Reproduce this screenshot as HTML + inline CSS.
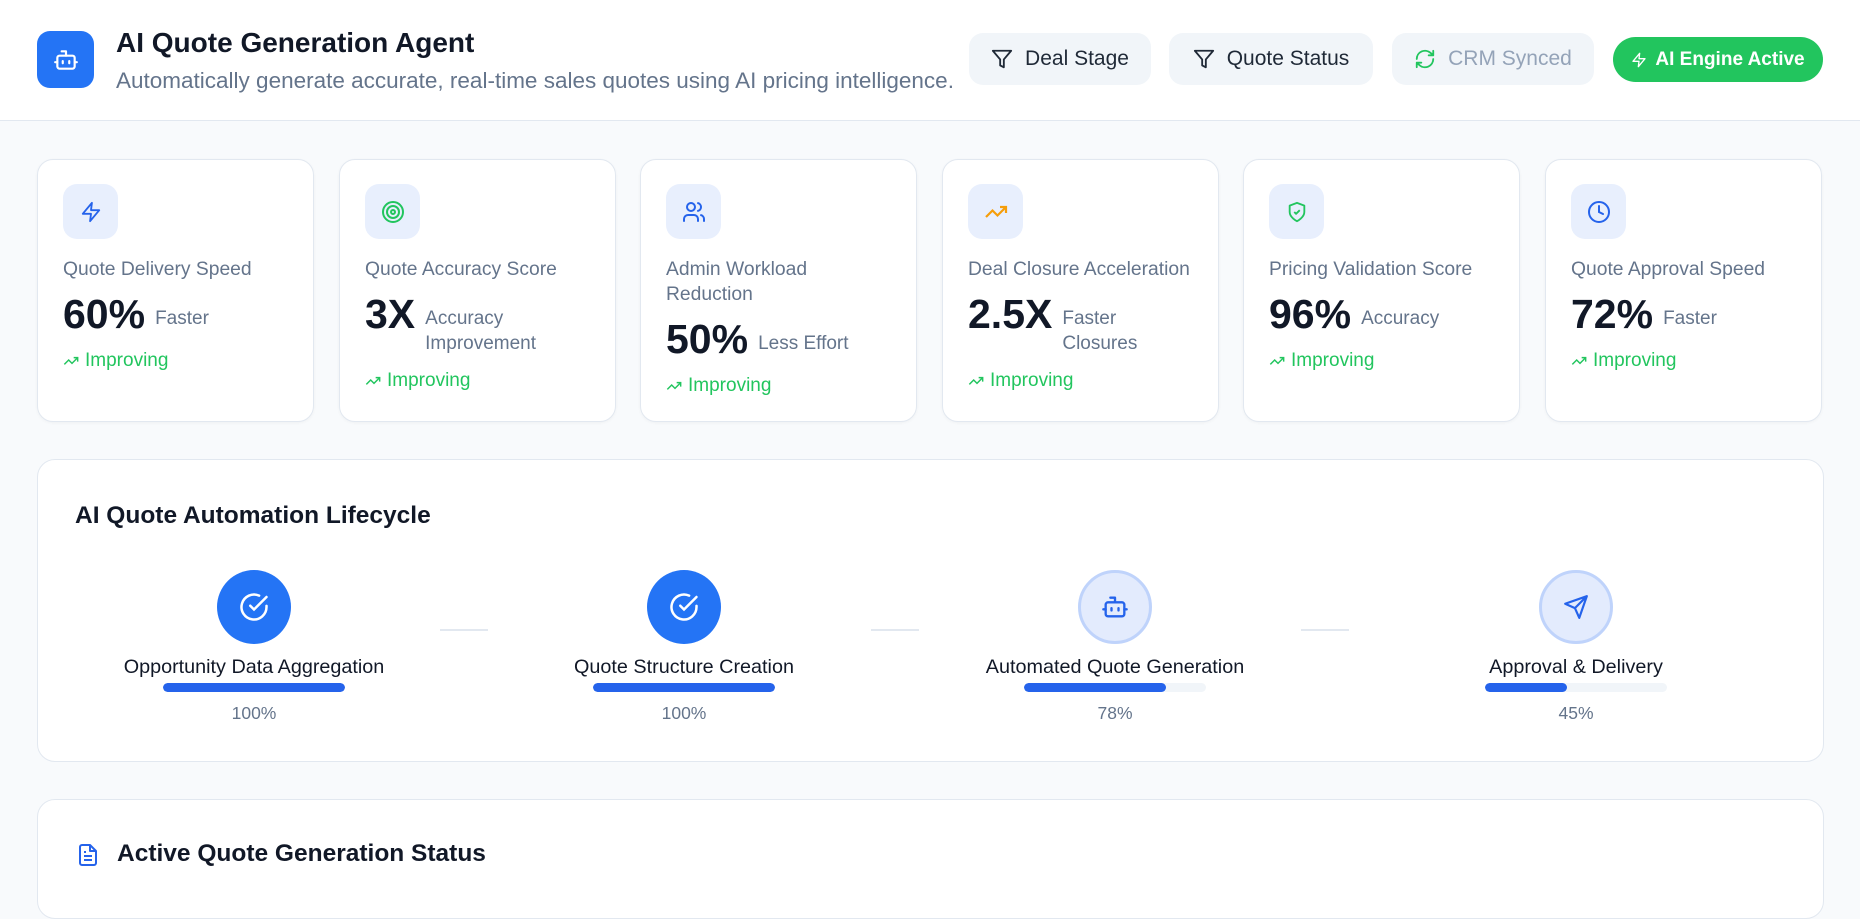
<!DOCTYPE html>
<html><head><meta charset="utf-8">
<style>
*{box-sizing:border-box;margin:0;padding:0}
body{width:1860px;height:877px;overflow:hidden;background:#f8fafc;font-family:"Liberation Sans",sans-serif;position:relative;color:#111827}
.hdr{position:absolute;left:0;top:0;width:1860px;height:121px;background:#fff;border-bottom:1px solid #e2e8f0}
.abs{position:absolute}
.btn{position:absolute;top:33px;height:52px;border-radius:14px;background:#f1f5f9;display:flex;align-items:center;justify-content:center;gap:12px;font-size:21px;color:#1f2937}
.card{position:absolute;top:159px;width:277px;height:263px;background:#fff;border:1px solid #e2e8f0;border-radius:16px;box-shadow:0 1px 3px rgba(0,0,0,.04)}
.ib{position:absolute;left:25px;top:24px;width:55px;height:55px;border-radius:14px;background:#e8effd;display:flex;align-items:center;justify-content:center}
.lbl{position:absolute;left:25px;top:97px;font-size:19.3px;color:#64748b;line-height:25px;width:245px}
.val{position:absolute;left:25px;display:flex;align-items:flex-start;gap:10px}
.val b{font-size:41px;color:#111827;line-height:46px}
.val span{font-size:19px;color:#64748b;line-height:25px;margin-top:15px}
.imp{position:absolute;left:25px;font-size:19px;color:#22c55e;display:flex;align-items:center;gap:6px}
.panel{position:absolute;left:37px;width:1787px;background:#fff;border:1px solid #e2e8f0;border-radius:18px}
.step{position:absolute;width:320px;text-align:center}
.circ{width:74px;height:74px;border-radius:50%;margin:0 auto;display:flex;align-items:center;justify-content:center}
.sl{position:absolute;top:86px;width:320px;font-size:19.8px;color:#111827}
.bar{position:absolute;left:69px;top:113px;width:182px;height:9px;border-radius:5px;background:#f1f5f9;overflow:hidden}
.bar i{display:block;height:100%;background:#2563eb;border-radius:5px}
.pc{position:absolute;top:133px;width:320px;font-size:17.5px;color:#64748b}
.con{position:absolute;top:629px;width:48px;height:2px;background:#e2e8f0}
</style></head><body>
<div class="hdr"></div>
<div class="abs" style="left:37px;top:31px;width:57px;height:57px;border-radius:13px;background:#2474f5;display:flex;align-items:center;justify-content:center">
<svg width="26" height="26" viewBox="0 0 24 24" fill="none" stroke="#fff" stroke-width="2" stroke-linecap="round" stroke-linejoin="round"><path d="M12 8V4H8"/><rect x="4" y="8" width="16" height="12" rx="2"/><path d="M2 14h2M20 14h2M15 13v2M9 13v2"/></svg></div>
<div class="abs" style="left:116px;top:27px;font-size:28px;font-weight:bold;color:#111827">AI Quote Generation Agent</div>
<div class="abs" style="left:116px;top:68px;font-size:22.5px;color:#64748b">Automatically generate accurate, real-time sales quotes using AI pricing intelligence.</div>

<div class="btn" style="left:969px;width:182px"><svg width="22" height="22" viewBox="0 0 24 24" fill="none" stroke="#1f2937" stroke-width="2" stroke-linejoin="round"><path d="M22 3H2l8 9.46V19l4 2v-8.54L22 3z"/></svg>Deal Stage</div>
<div class="btn" style="left:1169px;width:204px"><svg width="22" height="22" viewBox="0 0 24 24" fill="none" stroke="#1f2937" stroke-width="2" stroke-linejoin="round"><path d="M22 3H2l8 9.46V19l4 2v-8.54L22 3z"/></svg>Quote Status</div>
<div class="btn" style="left:1392px;width:202px;color:#94a3b8"><svg width="22" height="22" viewBox="0 0 24 24" fill="none" stroke="#22c55e" stroke-width="2" stroke-linecap="round" stroke-linejoin="round"><path d="M3 12a9 9 0 0 1 15-6.7L21 8M21 3v5h-5M21 12a9 9 0 0 1-15 6.7L3 16M3 21v-5h5"/></svg>CRM Synced</div>
<div class="btn" style="left:1613px;top:37px;height:45px;width:210px;border-radius:23px;background:#22c55e;color:#fff;font-weight:bold;font-size:19px;gap:8px"><svg width="16" height="16" viewBox="0 0 24 24" fill="none" stroke="#fff" stroke-width="2" stroke-linejoin="round"><path d="M13 2L3 14h9l-1 8 10-12h-9l1-8z"/></svg>AI Engine Active</div>

<div class="card" style="left:37px"><div class="ib"><svg width="22" height="22" viewBox="0 0 24 24" fill="none" stroke="#2563eb" stroke-width="2" stroke-linejoin="round"><path d="M13 2L3 14h9l-1 8 10-12h-9l1-8z"/></svg></div>
<div class="lbl">Quote Delivery Speed</div><div class="val" style="top:131px"><b>60%</b><span>Faster</span></div>
<div class="imp" style="top:190px"><svg width="16" height="16" viewBox="0 0 24 24" fill="none" stroke="#22c55e" stroke-width="2.2"><path d="M22 7l-8.5 8.5-5-5L2 17M16 7h6v6"/></svg>Improving</div></div>

<div class="card" style="left:339px"><div class="ib"><svg width="24" height="24" viewBox="0 0 24 24" fill="none" stroke="#22c55e" stroke-width="2"><circle cx="12" cy="12" r="10"/><circle cx="12" cy="12" r="6"/><circle cx="12" cy="12" r="2"/></svg></div>
<div class="lbl">Quote Accuracy Score</div><div class="val" style="top:131px"><b>3X</b><span>Accuracy<br>Improvement</span></div>
<div class="imp" style="top:210px"><svg width="16" height="16" viewBox="0 0 24 24" fill="none" stroke="#22c55e" stroke-width="2.2"><path d="M22 7l-8.5 8.5-5-5L2 17M16 7h6v6"/></svg>Improving</div></div>

<div class="card" style="left:640px"><div class="ib"><svg width="24" height="24" viewBox="0 0 24 24" fill="none" stroke="#2563eb" stroke-width="2" stroke-linecap="round"><path d="M16 21v-2a4 4 0 0 0-4-4H6a4 4 0 0 0-4 4v2"/><circle cx="9" cy="7" r="4"/><path d="M22 21v-2a4 4 0 0 0-3-3.87M16 3.13a4 4 0 0 1 0 7.75"/></svg></div>
<div class="lbl">Admin Workload<br>Reduction</div><div class="val" style="top:156px"><b>50%</b><span>Less Effort</span></div>
<div class="imp" style="top:215px"><svg width="16" height="16" viewBox="0 0 24 24" fill="none" stroke="#22c55e" stroke-width="2.2"><path d="M22 7l-8.5 8.5-5-5L2 17M16 7h6v6"/></svg>Improving</div></div>

<div class="card" style="left:942px"><div class="ib"><svg width="24" height="24" viewBox="0 0 24 24" fill="none" stroke="#f59e0b" stroke-width="2.2"><path d="M22 7l-8.5 8.5-5-5L2 17M16 7h6v6"/></svg></div>
<div class="lbl">Deal Closure Acceleration</div><div class="val" style="top:131px"><b>2.5X</b><span>Faster<br>Closures</span></div>
<div class="imp" style="top:210px"><svg width="16" height="16" viewBox="0 0 24 24" fill="none" stroke="#22c55e" stroke-width="2.2"><path d="M22 7l-8.5 8.5-5-5L2 17M16 7h6v6"/></svg>Improving</div></div>

<div class="card" style="left:1243px"><div class="ib"><svg width="22" height="22" viewBox="0 0 24 24" fill="none" stroke="#22c55e" stroke-width="2" stroke-linejoin="round"><path d="M12 22s8-4 8-10V5l-8-3-8 3v7c0 6 8 10 8 10z"/><path d="M9 12l2 2 4-4"/></svg></div>
<div class="lbl">Pricing Validation Score</div><div class="val" style="top:131px"><b>96%</b><span>Accuracy</span></div>
<div class="imp" style="top:190px"><svg width="16" height="16" viewBox="0 0 24 24" fill="none" stroke="#22c55e" stroke-width="2.2"><path d="M22 7l-8.5 8.5-5-5L2 17M16 7h6v6"/></svg>Improving</div></div>

<div class="card" style="left:1545px"><div class="ib"><svg width="24" height="24" viewBox="0 0 24 24" fill="none" stroke="#2563eb" stroke-width="2" stroke-linecap="round"><circle cx="12" cy="12" r="10"/><path d="M12 6v6l4 2"/></svg></div>
<div class="lbl">Quote Approval Speed</div><div class="val" style="top:131px"><b>72%</b><span>Faster</span></div>
<div class="imp" style="top:190px"><svg width="16" height="16" viewBox="0 0 24 24" fill="none" stroke="#22c55e" stroke-width="2.2"><path d="M22 7l-8.5 8.5-5-5L2 17M16 7h6v6"/></svg>Improving</div></div>

<div class="panel" style="top:459px;height:303px"></div>
<div class="abs" style="left:75px;top:502px;font-size:24.5px;font-weight:bold;color:#111827">AI Quote Automation Lifecycle</div>

<div class="step" style="left:94px;top:570px"><div class="circ" style="background:#2474f5"><svg width="30" height="30" viewBox="0 0 24 24" fill="none" stroke="#fff" stroke-width="2" stroke-linecap="round"><path d="M22 11.1V12a10 10 0 1 1-5.9-9.1"/><path d="M22 4L12 14l-3-3"/></svg></div><div class="sl">Opportunity Data Aggregation</div><div class="bar"><i style="width:100%"></i></div><div class="pc">100%</div></div>
<div class="step" style="left:524px;top:570px"><div class="circ" style="background:#2474f5"><svg width="30" height="30" viewBox="0 0 24 24" fill="none" stroke="#fff" stroke-width="2" stroke-linecap="round"><path d="M22 11.1V12a10 10 0 1 1-5.9-9.1"/><path d="M22 4L12 14l-3-3"/></svg></div><div class="sl">Quote Structure Creation</div><div class="bar"><i style="width:100%"></i></div><div class="pc">100%</div></div>
<div class="step" style="left:955px;top:570px"><div class="circ" style="background:#e3ebfd;border:3px solid #bfd3fb"><svg width="28" height="28" viewBox="0 0 24 24" fill="none" stroke="#2563eb" stroke-width="2" stroke-linecap="round" stroke-linejoin="round"><path d="M12 8V4H8"/><rect x="4" y="8" width="16" height="12" rx="2"/><path d="M2 14h2M20 14h2M15 13v2M9 13v2"/></svg></div><div class="sl">Automated Quote Generation</div><div class="bar"><i style="width:78%"></i></div><div class="pc">78%</div></div>
<div class="step" style="left:1416px;top:570px"><div class="circ" style="background:#e3ebfd;border:3px solid #bfd3fb"><svg width="26" height="26" viewBox="0 0 24 24" fill="none" stroke="#2563eb" stroke-width="2" stroke-linejoin="round"><path d="M22 2L11 13M22 2l-7 20-4-9-9-4 20-7z"/></svg></div><div class="sl">Approval &amp; Delivery</div><div class="bar"><i style="width:45%"></i></div><div class="pc">45%</div></div>
<div class="con" style="left:440px"></div>
<div class="con" style="left:871px"></div>
<div class="con" style="left:1301px"></div>

<div class="panel" style="top:799px;height:120px"></div>
<div class="abs" style="left:76px;top:841px"><svg width="24" height="28" viewBox="0 0 24 24" fill="none" stroke="#2563eb" stroke-width="2" stroke-linejoin="round"><path d="M14 2H6a2 2 0 0 0-2 2v16a2 2 0 0 0 2 2h12a2 2 0 0 0 2-2V8z"/><path d="M14 2v6h6M16 13H8M16 17H8M10 9H8"/></svg></div>
<div class="abs" style="left:117px;top:840px;font-size:24.5px;font-weight:bold;color:#111827">Active Quote Generation Status</div>
</body></html>
